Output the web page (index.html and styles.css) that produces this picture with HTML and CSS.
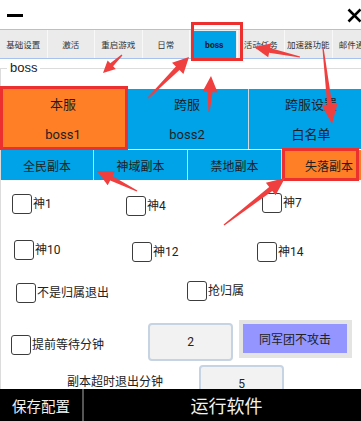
FILE: index.html
```html
<!DOCTYPE html>
<html lang="zh">
<head>
<meta charset="utf-8">
<title>boss</title>
<link rel="stylesheet" href="styles.css">
</head>
<body>
<div class="app">
  <div class="header">
    <span class="minimize"></span>
    <svg class="close" width="15" height="15" viewBox="0 0 15 15"><path d="M1.5 1.5 L13.5 13.5 M13.5 1.5 L1.5 13.5" stroke="#000" stroke-width="2.6" fill="none"/></svg>
  </div>
  <div class="tabbar">
    <div class="tab">基础设置</div>
    <div class="tab">激活</div>
    <div class="tab">重启游戏</div>
    <div class="tab">日常</div>
    <div class="tab active"><span>boss</span></div>
    <div class="tab">活动任务</div>
    <div class="tab">加速器功能</div>
    <div class="tab">邮件通知</div>
  </div>
  <div class="content">
    <fieldset class="group">
      <legend>boss</legend>
      <div class="servers">
        <div class="srv selected"><span>本服</span><span>boss1</span></div>
        <div class="srv"><span>跨服</span><span>boss2</span></div>
        <div class="srv"><span>跨服设置</span><span>白名单</span></div>
      </div>
      <div class="dungeons">
        <div class="dg">全民副本</div>
        <div class="dg">神域副本</div>
        <div class="dg">禁地副本</div>
        <div class="dg selected">失落副本</div>
      </div>
      <div class="row row1">
        <label class="chk mt1"><span class="box"></span>神1</label>
        <label class="chk mt3"><span class="box"></span>神4</label>
        <label class="chk"><span class="box"></span>神7</label>
      </div>
      <div class="row row2">
        <label class="chk"><span class="box"></span>神10</label>
        <label class="chk mt2"><span class="box"></span>神12</label>
        <label class="chk mt2"><span class="box"></span>神14</label>
      </div>
      <div class="row row3">
        <label class="chk mt2"><span class="box"></span>不是归属退出</label>
        <label class="chk"><span class="box"></span>抢归属</label>
      </div>
      <div class="row row4">
        <label class="chk mt15"><span class="box"></span>提前等待分钟</label>
        <div class="field mt3">2</div>
        <div class="btn-outer"><div class="btn-inner">同军团不攻击</div></div>
      </div>
      <div class="row row5">
        <div class="lbl">副本超时退出分钟</div>
        <div class="field">5</div>
      </div>
    </fieldset>
  </div>
  <div class="bottombar">
    <div class="bb save">保存配置</div>
    <div class="bb run">运行软件</div>
  </div>
  <svg class="marks" width="361" height="421" viewBox="0 0 361 421">
    <g fill="none" stroke="#ec2f2f" stroke-width="3">
      <rect x="192.5" y="23.5" width="49" height="36"/>
      <rect x="1.5" y="87.5" width="125" height="61"/>
      <rect x="283.5" y="149.5" width="74" height="30"/>
    </g>
    <g fill="#f03f3f">
      <polygon points="121.6,54.6 110.3,63.3 107.6,60.4 103,73 115.8,69.1 113.1,66.2 122.4,55.4"/>
      <polygon points="148.4,98.4 179.5,70.1 183.4,74.0 189,57 172.0,62.7 175.9,66.5 147.6,97.6"/>
      <polygon points="209.6,112 212.6,92.1 217.6,92.4 211,76 202.6,91.6 207.6,91.8 208.4,112"/>
      <polygon points="300.1,56.4 270.2,48.0 271.1,43.6 254,47 268.2,57.2 269.1,52.8 299.9,57.6"/>
      <polygon points="322.4,48.1 327.2,104.4 321.7,105.1 332,124 337.6,103.2 332.1,103.9 323.6,47.9"/>
      <polygon points="137.3,190.5 112.4,175.9 114.9,171.0 97,171 107.7,185.3 110.2,180.4 136.7,191.5"/>
      <polygon points="224.4,225.5 272.3,191.0 275.6,195.3 285,178 265.9,182.7 269.2,187.0 223.6,224.5"/>
    </g>
  </svg>
</div>
</body>
</html>
```

FILE: styles.css
```css
* { box-sizing: border-box; }
html, body { margin: 0; padding: 0; }
body {
  width: 361px;
  height: 421px;
  overflow: hidden;
  background: #fff;
  font-family: Roboto, "Noto Sans CJK SC", sans-serif;
  color: #222;
}
.app {
  position: relative;
  width: 361px;
  height: 421px;
  display: flex;
  flex-direction: column;
  overflow: hidden;
}
.header {
  height: 29px;
  flex: 0 0 29px;
  display: flex;
  align-items: center;
  justify-content: space-between;
}
.minimize {
  display: block;
  width: 16px;
  height: 3px;
  background: #000;
  margin-left: 7px;
  margin-top: 1px;
}
.close { display: block; margin-right: -1px; margin-top: 1px; }

.tabbar {
  flex: 0 0 30px;
  height: 30px;
  display: flex;
  background: #ebebeb;
  border-top: 1px solid #a6c2ee;
  border-bottom: 1px solid #a6c2ee;
  overflow: hidden;
}
.tab {
  flex: 0 0 47.5px;
  width: 47.5px;
  display: flex;
  align-items: center;
  justify-content: center;
  font-size: 8.5px;
  color: #333;
  border-right: 1px solid #f8f8f8;
  white-space: nowrap;
  overflow: hidden;
}
.tab.active { padding: 1px 1px 0 3px; }
.tab.active span {
  display: flex;
  align-items: center;
  justify-content: center;
  width: 100%;
  height: 100%;
  background: #00a2e8;
  font-weight: bold;
  color: #1a1a1a;
}

.content {
  flex: 0 0 330px;
  height: 330px;
  overflow: hidden;
}
.group {
  margin: 2px 0 0 0;
  padding: 0;
  width: 390px;
  min-width: 0;
  border: 1px solid #dcdcdc;
  border-right: none;
  border-bottom: none;
}
.group legend {
  margin-left: 6px;
  padding: 0 3px;
  font-family: "Liberation Sans", Roboto, sans-serif;
  font-size: 13px;
  line-height: 14px;
  color: #222;
}

.servers {
  margin-top: 14px;
  display: grid;
  grid-template-columns: 124px 122px 124px;
  column-gap: 1px;
  background: #d4d8da;
  width: 372px;
}
.srv {
  height: 60px;
  background: #00a2e8;
  display: flex;
  flex-direction: column;
  align-items: center;
  padding-top: 8px;
  gap: 14px;
  font-size: 13px;
  line-height: 16px;
  color: #1e1e1e;
  white-space: nowrap;
}
.srv.selected, .dg.selected { background: #ff7f27; }
.dungeons {
  margin-top: 1px;
  display: grid;
  grid-template-columns: 92px 93px 93px 94px;
  column-gap: 1px;
  background: #d4d8da;
  width: 375px;
}
.dg {
  height: 30px;
  background: #00a2e8;
  display: flex;
  align-items: center;
  justify-content: center;
  font-size: 12px;
  color: #1e1e1e;
}

.row { display: grid; align-items: start; }
.row1 { margin-top: 13px; height: 23px; padding-left: 11px; grid-template-columns: 114px 136px auto; }
.row2 { margin-top: 24px; height: 22px; padding-left: 13px; grid-template-columns: 118px 125px auto; }
.row3 { margin-top: 19px; height: 22px; padding-left: 15px; grid-template-columns: 171px auto; }
.row4 { margin-top: 17px; height: 41px; padding-left: 10px; grid-template-columns: 137px 91px auto; }
.row5 { margin-top: 4px; padding-left: 66px; grid-template-columns: 132px auto; }

.chk {
  display: inline-flex;
  align-items: center;
  gap: 1px;
  font-size: 12px;
  line-height: 17px;
  color: #222;
  white-space: nowrap;
}
.box {
  display: block;
  width: 20px;
  height: 20px;
  border: 1.6px solid #3c3c3c;
  border-radius: 3px;
  background: #fff;
}
.mt1 { margin-top: 1px; }
.mt2 { margin-top: 2px; }
.mt3 { margin-top: 3px; }
.mt15 { margin-top: 15px; }

.field {
  width: 85px;
  height: 38px;
  background: #f2f2f2;
  border: 2px solid #c6d3e2;
  border-radius: 4px;
  display: flex;
  align-items: center;
  justify-content: center;
  font-size: 12px;
  color: #222;
}
.btn-outer {
  width: 113px;
  height: 38px;
  background: #e4e4e2;
  padding: 4px 5px 5px 4px;
}
.btn-inner {
  width: 100%;
  height: 100%;
  background: #9595ff;
  display: flex;
  align-items: center;
  justify-content: center;
  font-size: 12px;
  color: #222;
}
.lbl {
  margin-top: 9px;
  font-size: 12px;
  line-height: 17px;
  white-space: nowrap;
}

.bottombar {
  flex: 0 0 32px;
  height: 32px;
  display: flex;
  gap: 2px;
  background: #555;
}
.bb {
  background: #000;
  color: #f2f2f2;
  display: flex;
  align-items: center;
  justify-content: center;
}
.save { flex: 0 0 82px; font-size: 14.5px; }
.run { flex: 1; font-size: 18px; padding-left: 8px; }

.marks {
  position: absolute;
  left: 0;
  top: 0;
  pointer-events: none;
}
```
